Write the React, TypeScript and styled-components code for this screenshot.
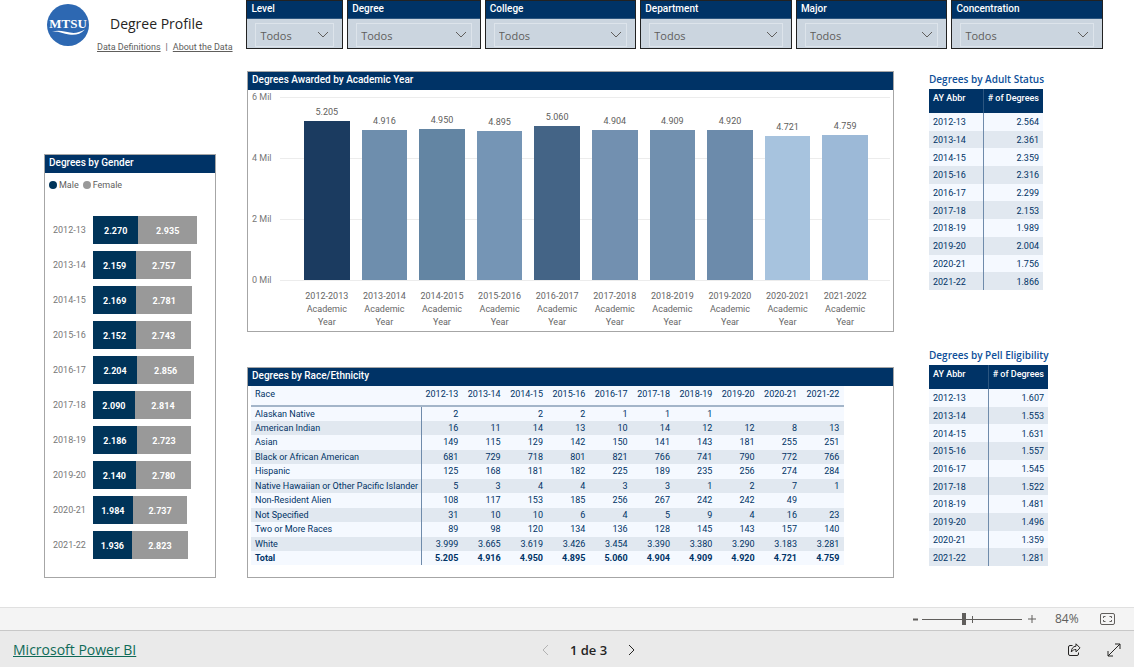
import React from "react";
import styled, { createGlobalStyle } from "styled-components";

const navy = "#003366";
const sans = `"Open Sans", "Noto Sans", sans-serif`;
const small = `Roboto, "Open Sans", sans-serif`;

const GlobalStyle = createGlobalStyle`
  *, *::before, *::after { box-sizing: border-box; }
  body { margin: 0; background: #fff; font-family: ${small}; font-size: 9px; color: #252423; }
  button, select, input { font: inherit; color: inherit; margin: 0; }
  h1, h2 { margin: 0; }
`;

const Page = styled.div`
  min-height: 100vh;
  display: flex;
  flex-direction: column;
`;

const Report = styled.main`
  flex: 1;
  padding: 0 31px 28px 44px;
`;

const TopRow = styled.header`
  display: grid;
  grid-template-columns: minmax(0, 199fr) minmax(0, 97fr) minmax(0, 134fr) repeat(4, minmax(0, 152fr));
  column-gap: 4px;
  align-items: start;
  height: 55px;
`;

const Brand = styled.div`
  display: flex;
  gap: 8px;
  padding-left: 3px;
`;

const Logo = styled.svg`
  flex: none;
  width: 42px;
  height: 42px;
  margin-top: 4px;
`;

const BrandText = styled.div`
  padding-top: 12px;
  white-space: nowrap;
`;

const Title = styled.h1`
  padding-left: 13px;
  font-family: ${sans};
  font-size: 14px;
  line-height: 24px;
  font-weight: 400;
`;

const Links = styled.nav`
  display: flex;
  gap: 5px;
  margin-top: 3px;
  line-height: 16px;
  color: #605e5c;
  a { color: inherit; }
`;

const Slicer = styled.label`
  display: block;
  height: 49px;
  border: 1px solid #222;
  background: #cbd5df;
`;

const SlicerName = styled.span`
  display: block;
  height: 18px;
  padding-left: 4px;
  border-bottom: 1px solid #2c5680;
  background: ${navy};
  color: #fff;
  font-size: 10px;
  line-height: 16px;
  font-weight: 500;
`;

const SelectBox = styled.span`
  display: flex;
  align-items: center;
  height: 24px;
  margin: 4px 8px 0;
  padding-right: 4px;
  border: 1px solid #dde4eb;
  color: #605e5c;
`;

const Select = styled.select`
  flex: 1;
  min-width: 0;
  height: 22px;
  padding: 0 0 0 4px;
  border: 0;
  appearance: none;
  background: transparent;
  font-family: ${sans};
  font-size: 11px;
`;

const Columns = styled.div`
  display: grid;
  grid-template-columns: minmax(0, 172fr) minmax(0, 647fr) minmax(0, 178fr);
  column-gap: 31px;
  margin-top: 16px;
`;

const Panel = styled.section`
  border: 1px solid #a6a6a6;
  background: #fff;
`;

const GenderPanel = styled(Panel)`
  margin-top: 83px;
`;

const MainColumn = styled.div`
  display: grid;
  grid-template-rows: 261px 211px;
  row-gap: 35px;
`;

const PanelTitle = styled.h2`
  height: 18px;
  padding-left: 4px;
  background: ${navy};
  color: #fff;
  font-size: 10px;
  line-height: 16px;
  font-weight: 500;
`;

const Legend = styled.div`
  display: flex;
  gap: 4px;
  padding: 5px 4px 0;
  line-height: 14px;
  color: #605e5c;
`;

const LegendItem = styled.span<{ $color: string }>`
  display: flex;
  align-items: center;
  gap: 2px;
  &::before {
    content: "";
    width: 8px;
    height: 8px;
    border-radius: 50%;
    background: ${(p) => p.$color};
  }
`;

const GenderRows = styled.div`
  display: flex;
  flex-direction: column;
  gap: 7px;
  padding: 24px 2px 0 8px;
`;

const GenderRow = styled.div`
  display: flex;
  align-items: center;
  height: 28px;
`;

const GenderYear = styled.span`
  flex: none;
  width: 40px;
  color: #777;
`;

const GenderTrack = styled.div`
  flex: 1;
  display: flex;
  height: 28px;
`;

const Segment = styled.div<{ $color: string }>`
  display: flex;
  align-items: center;
  justify-content: center;
  padding-top: 2px;
  background: ${(p) => p.$color};
  color: #fff;
  font-weight: 700;
`;

const Chart = styled.div`
  display: grid;
  grid-template-columns: 28px minmax(0, 1fr);
  padding: 0 3px 0 4px;
`;

const YAxis = styled.div`
  display: flex;
  flex-direction: column;
  justify-content: space-between;
  height: 197px;
  line-height: 14px;
  color: #777;
`;

const Plot = styled.div`
  display: flex;
  height: 184px;
  margin-top: 7px;
  padding: 0 16px 1px 18px;
  background: repeating-linear-gradient(to bottom, #ececec 0 1px, transparent 1px 61px);
`;

const Bin = styled.div`
  flex: 1;
  display: flex;
  flex-direction: column;
  align-items: center;
  justify-content: flex-end;
`;

const BinValue = styled.span`
  margin-bottom: 3px;
  line-height: 12px;
  color: #605e5c;
`;

const Bar = styled.div<{ $color: string }>`
  flex: none;
  width: 79%;
  background: ${(p) => p.$color};
`;

const XAxis = styled.div`
  grid-column: 2;
  display: flex;
  padding: 3px 16px 0 18px;
  line-height: 13px;
  text-align: center;
  color: #666;
  span { flex: 1; padding: 0 4px; }
`;

const RaceTable = styled.table`
  width: 92%;
  height: 179px;
  margin-left: 3px;
  border-collapse: collapse;
  table-layout: fixed;
  color: ${navy};
  line-height: 12px;
  th, td { padding: 0 5px 0 4px; text-align: right; font-weight: 400; white-space: nowrap; }
  th:first-child { width: 170px; padding-right: 0; text-align: left; }
  thead th { height: 20px; padding-bottom: 4px; border-bottom: 2px solid #a3b5c9; background: #f5f9ff; }
  tbody th, tfoot th { border-right: 1px solid #6f8bab; }
  tbody tr, tfoot tr { height: 14px; background: #f5f9ff; }
  tbody tr:nth-child(even) { background: #e1e8f0; }
  tfoot th, tfoot td { font-weight: 700; }
`;

const SideColumn = styled.div`
  display: grid;
  grid-template-rows: 276px auto;
  align-content: start;
  padding-left: 4px;
`;

const SideTitle = styled.h2`
  height: 18px;
  font-family: ${sans};
  font-size: 10px;
  line-height: 16px;
  font-weight: 600;
  color: #0d4f99;
  white-space: nowrap;
`;

const SideTable = styled.table<{ $width: number; $first: number }>`
  width: ${(p) => p.$width}px;
  height: 201px;
  border-collapse: collapse;
  table-layout: fixed;
  color: ${navy};
  th, td { padding: 1px 4px 0; text-align: right; font-weight: 400; white-space: nowrap; line-height: 12px; }
  th:first-child { width: ${(p) => p.$first}px; text-align: left; }
  thead tr { height: 24px; background: ${navy}; color: #fff; }
  thead th { padding: 0 4px 6px; font-weight: 500; }
  thead th:first-child { border-right: 1px solid #2c5680; }
  tbody tr { height: 17px; background: #f5f9ff; }
  tbody th { border-right: 1px solid #6f8bab; }
  tbody tr:nth-child(even) { background: #e1e8f0; }
`;

const ZoomBar = styled.div`
  display: flex;
  align-items: center;
  justify-content: flex-end;
  height: 23px;
  padding-right: 19px;
  border-top: 1px solid #e0e0e0;
  background: #f4f4f4;
  color: #605e5c;
`;

const PlainButton = styled.button`
  display: flex;
  align-items: center;
  justify-content: center;
  padding: 0;
  border: 0;
  background: none;
  cursor: pointer;
  &:disabled { color: #b3b3b3; cursor: default; }
`;

const StepButton = styled(PlainButton)`
  width: 14px;
  height: 20px;
`;

const Slider = styled.input`
  && { margin-right: 3px; }
  width: 100px;
  height: 13px;
  appearance: none;
  background:
    linear-gradient(#605e5c, #605e5c) 50% 50% / 1px 7px no-repeat,
    linear-gradient(#605e5c, #605e5c) 0 50% / 100% 1px no-repeat;
  &::-webkit-slider-thumb {
    appearance: none;
    width: 4px;
    height: 12px;
    background: #605e5c;
  }
`;

const ZoomLevel = styled.span`
  width: 46px;
  margin: 0 12px 0 3px;
  padding-left: 13px;
  font-family: ${sans};
  font-size: 12px;
  line-height: 20px;
`;

const Footer = styled.footer`
  display: grid;
  grid-template-columns: minmax(0, 528fr) auto minmax(0, 485fr);
  align-items: center;
  height: 37px;
  padding: 2px 13px 0;
  border-top: 1px solid #c8c8c8;
  background: #eaeaea;
  font-family: ${sans};
`;

const PowerLink = styled.a`
  color: #0f6a58;
  font-size: 14px;
  line-height: 20px;
`;

const Pager = styled.div`
  display: flex;
  align-items: center;
  gap: 21px;
  color: #252423;
  font-size: 13px;
  line-height: 20px;
  font-weight: 600;
`;

const FooterIcons = styled.div`
  display: flex;
  justify-content: flex-end;
  gap: 26px;
`;

const slicers = ["Level", "Degree", "College", "Department", "Major", "Concentration"];
const years = ["2012-13", "2013-14", "2014-15", "2015-16", "2016-17", "2017-18", "2018-19", "2019-20", "2020-21", "2021-22"];
const male = [2270, 2159, 2169, 2152, 2204, 2090, 2186, 2140, 1984, 1936];
const female = [2935, 2757, 2781, 2743, 2856, 2814, 2723, 2780, 2737, 2823];
const totals = [5205, 4916, 4950, 4895, 5060, 4904, 4909, 4920, 4721, 4759];
const barColors = ["#1b3b60", "#6e8ead", "#6385a3", "#7595b5", "#446486", "#7290b0", "#7190af", "#6c8bab", "#a7c3de", "#9cb9d7"];
const adult = [2564, 2361, 2359, 2316, 2299, 2153, 1989, 2004, 1756, 1866];
const pell = [1607, 1553, 1631, 1557, 1545, 1522, 1481, 1496, 1359, 1281];
const races: [string, (number | null)[]][] = [
  ["Alaskan Native", [2, null, 2, 2, 1, 1, 1, null, null, null]],
  ["American Indian", [16, 11, 14, 13, 10, 14, 12, 12, 8, 13]],
  ["Asian", [149, 115, 129, 142, 150, 141, 143, 181, 255, 251]],
  ["Black or African American", [681, 729, 718, 801, 821, 766, 741, 790, 772, 766]],
  ["Hispanic", [125, 168, 181, 182, 225, 189, 235, 256, 274, 284]],
  ["Native Hawaiian or Other Pacific Islander", [5, 3, 4, 4, 3, 3, 1, 2, 7, 1]],
  ["Non-Resident Alien", [108, 117, 153, 185, 256, 267, 242, 242, 49, null]],
  ["Not Specified", [31, 10, 10, 6, 4, 5, 9, 4, 16, 23]],
  ["Two or More Races", [89, 98, 120, 134, 136, 128, 145, 143, 157, 140]],
  ["White", [3999, 3665, 3619, 3426, 3454, 3390, 3380, 3290, 3183, 3281]],
];

const fmt = (n: number | null) => (n === null ? "" : String(n).replace(/(\d)(\d{3})$/, "$1.$2"));

const Stroke = ({ d, w, h, width = 1 }: { d: string; w: number; h: number; width?: number }) => (
  <svg width={w} height={h} viewBox={`0 0 ${w} ${h}`} fill="none" stroke="currentColor" strokeWidth={width} aria-hidden="true">
    <path d={d} />
  </svg>
);

function YearTable({ title, values, width, first }: { title: string; values: number[]; width: number; first: number }) {
  return (
    <section>
      <SideTitle>{title}</SideTitle>
      <SideTable $width={width} $first={first}>
        <thead>
          <tr><th scope="col">AY Abbr</th><th scope="col"># of Degrees</th></tr>
        </thead>
        <tbody>
          {years.map((y, i) => (
            <tr key={y}><th scope="row">{y}</th><td>{fmt(values[i])}</td></tr>
          ))}
        </tbody>
      </SideTable>
    </section>
  );
}

export default function App() {
  return (
    <Page>
      <GlobalStyle />
      <Report>
        <TopRow>
          <Brand>
            <Logo viewBox="0 0 42 42" role="img" aria-label="MTSU">
              <circle cx="21" cy="21" r="21" fill="#2d68b2" />
              <text x="21" y="24" textAnchor="middle" fontFamily="Liberation Serif, serif" fontWeight="700" fontSize="13" fill="#fff">MTSU</text>
              <path d="M5 27.500c7-2 13 0 18 1s9 0 15-3c-5 5-10 6-16 5S12 27 5 27.500z" fill="#fff" />
            </Logo>
            <BrandText>
              <Title>Degree Profile</Title>
              <Links>
                <a href="#definitions">Data Definitions</a>
                <span>|</span>
                <a href="#about">About the Data</a>
              </Links>
            </BrandText>
          </Brand>
          {slicers.map((s) => (
            <Slicer key={s}>
              <SlicerName>{s}</SlicerName>
              <SelectBox>
                <Select defaultValue="Todos"><option>Todos</option></Select>
                <Stroke w={12} h={8} d="M1 1l5 5 5-5" />
              </SelectBox>
            </Slicer>
          ))}
        </TopRow>
        <Columns>
          <GenderPanel>
            <PanelTitle>Degrees by Gender</PanelTitle>
            <Legend>
              <LegendItem $color="#003459">Male</LegendItem>
              <LegendItem $color="#999">Female</LegendItem>
            </Legend>
            <GenderRows>
              {years.map((y, i) => (
                <GenderRow key={y}>
                  <GenderYear>{y}</GenderYear>
                  <GenderTrack>
                    <Segment $color="#003459" style={{ width: `${male[i] / 60}%` }}>{fmt(male[i])}</Segment>
                    <Segment $color="#999" style={{ width: `${female[i] / 60}%` }}>{fmt(female[i])}</Segment>
                  </GenderTrack>
                </GenderRow>
              ))}
            </GenderRows>
          </GenderPanel>
          <MainColumn>
            <Panel>
              <PanelTitle>Degrees Awarded by Academic Year</PanelTitle>
              <Chart>
                <YAxis>
                  <span>6 Mil</span><span>4 Mil</span><span>2 Mil</span><span>0 Mil</span>
                </YAxis>
                <Plot>
                  {years.map((y, i) => (
                    <Bin key={y}>
                      <BinValue>{fmt(totals[i])}</BinValue>
                      <Bar $color={barColors[i]} style={{ height: `${totals[i] / 60}%` }} />
                    </Bin>
                  ))}
                </Plot>
                <XAxis>
                  {years.map((y) => (
                    <span key={y}>{y.replace("-", "-20")} Academic Year</span>
                  ))}
                </XAxis>
              </Chart>
            </Panel>
            <Panel>
              <PanelTitle>Degrees by Race/Ethnicity</PanelTitle>
              <RaceTable>
                <thead>
                  <tr><th scope="col">Race</th>{years.map((y) => <th key={y} scope="col">{y}</th>)}</tr>
                </thead>
                <tbody>
                  {races.map(([name, vals]) => (
                    <tr key={name}><th scope="row">{name}</th>{vals.map((v, i) => <td key={years[i]}>{fmt(v)}</td>)}</tr>
                  ))}
                </tbody>
                <tfoot>
                  <tr><th scope="row">Total</th>{totals.map((v, i) => <td key={years[i]}>{fmt(v)}</td>)}</tr>
                </tfoot>
              </RaceTable>
            </Panel>
          </MainColumn>
          <SideColumn>
            <YearTable title="Degrees by Adult Status" values={adult} width={114} first={54} />
            <YearTable title="Degrees by Pell Eligibility" values={pell} width={119} first={59} />
          </SideColumn>
        </Columns>
      </Report>
      <ZoomBar>
        <StepButton aria-label="Zoom out"><Stroke w={5} h={3} width={2} d="M0 1.500h5" /></StepButton>
        <Slider type="range" min={0} max={100} defaultValue={42} aria-label="Zoom" />
        <StepButton aria-label="Zoom in"><Stroke w={8} h={8} d="M0 4h8M4 0v8" /></StepButton>
        <ZoomLevel>84%</ZoomLevel>
        <PlainButton aria-label="Fit to page">
          <Stroke w={15} h={12} d="M2 .5h11a1.500 1.500 0 0 1 1.500 1.500v8a1.500 1.500 0 0 1-1.500 1.500H2A1.500 1.500 0 0 1 .5 10V2A1.500 1.500 0 0 1 2 .5zM3.500 5V3.500h2M9.500 3.500h2V5M3.500 7v1.500h2M9.500 8.500h2V7" />
        </PlainButton>
      </ZoomBar>
      <Footer>
        <div><PowerLink href="https://powerbi.microsoft.com">Microsoft Power BI</PowerLink></div>
        <Pager>
          <PlainButton aria-label="Previous page" disabled><Stroke w={7} h={12} d="M6 1L1 6l5 5" /></PlainButton>
          <span>1 de 3</span>
          <PlainButton aria-label="Next page"><Stroke w={7} h={12} d="M1 1l5 5-5 5" /></PlainButton>
        </Pager>
        <FooterIcons>
          <PlainButton aria-label="Share">
            <Stroke w={14} h={14} d="M5.500 2.500H3A1.500 1.500 0 0 0 1.500 4v7A1.500 1.500 0 0 0 3 12.500h7A1.500 1.500 0 0 0 11.500 11V9.500M9 .8v2.400C6 3.400 4.500 5.500 4.300 9 5.500 7.200 7 6.500 9 6.500v2.400l4-4z" />
          </PlainButton>
          <PlainButton aria-label="Full screen">
            <Stroke w={14} h={14} d="M1 13L13 1M8 1h5v5M1 8v5h5" />
          </PlainButton>
        </FooterIcons>
      </Footer>
    </Page>
  );
}
